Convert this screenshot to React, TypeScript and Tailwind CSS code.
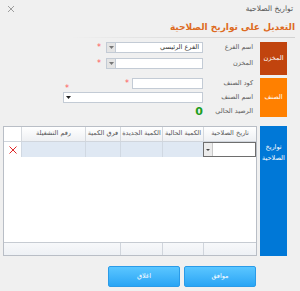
import React from "react";

const F = "font-['DejaVu_Sans',sans-serif]";

function Field({ w, text, drop, darkArrow }: { w: string; text?: string; drop?: boolean; darkArrow?: boolean }) {
  return (
    <div className={`${w} h-[11px] bg-white border border-[#c3cbd5] flex items-center`}>
      <div className="flex-1 text-[6.5px] text-[#333] pr-[3px] leading-none truncate">{text}</div>
      {drop && (
        <div className="w-[9px] h-full bg-[#e4e4e4] border-r border-[#c3cbd5] flex items-center justify-center">
          <svg width="5" height="3" viewBox="0 0 5 3"><path d="M0 0H5L2.5 3Z" fill="#777" /></svg>
        </div>
      )}
      {darkArrow && (
        <div className="w-[8px] h-full flex items-center justify-center">
          <svg width="5" height="3" viewBox="0 0 5 3"><path d="M0 0H5L2.5 3Z" fill="#222" /></svg>
        </div>
      )}
    </div>
  );
}

function Star({ cls }: { cls?: string }) {
  return <span className={`text-[#ff5a5a] text-[8px] leading-none ${cls ?? ""}`}>*</span>;
}

function Label({ children }: { children: React.ReactNode }) {
  return <div className="w-[50px] text-[6.5px] text-[#5a5a5a] leading-none whitespace-nowrap">{children}</div>;
}

export default function App() {
  const headers = ["تاريخ الصلاحية", "الكمية الحالية", "الكمية الجديدة", "فرق الكمية", "رقم التشغيلة", ""];
  const cols = "grid grid-cols-[53px_41px_42px_35px_64px_17px]";
  return (
    <div dir="rtl" className={`${F} w-[300px] h-[291px] bg-[#f0f0f0] overflow-hidden flex flex-col`}>
      {/* title bar */}
      <div className="h-[18px] flex items-center justify-between pr-[7px] pl-[8px]">
        <span className="text-[7.5px] text-[#555]">تواريخ الصلاحية</span>
        <svg width="6" height="6" viewBox="0 0 6 6"><path d="M0 0L6 6M6 0L0 6" stroke="#888" strokeWidth="0.8" /></svg>
      </div>
      {/* heading */}
      <div className="h-[19px] flex items-center pr-[5px]">
        <span className="text-[9px] font-bold text-[#dd6a22]">التعديل على تواريخ الصلاحية</span>
      </div>
      <div className="h-px mr-[5px] ml-[70px] bg-linear-to-l from-[#d2d2d2] via-[#dcdcdc] to-transparent" />

      {/* section 1 */}
      <div className="mt-[4px] flex gap-[7px] pr-[13px] pl-[3px] h-[33px]">
        <div className="w-[27px] h-full bg-[#c1440e] flex items-center justify-center text-white text-[6.5px]">المخزن</div>
        <div className="flex-1 flex flex-col">
          <div className="flex items-center h-[11px]">
            <Label>اسم الفرع</Label>
            <Field w="w-[97px]" text="الفرع الرئيسي" drop />
            <Star cls="mr-[5px]" />
          </div>
          <div className="flex items-center h-[11px] mt-[5px]">
            <Label>المخزن</Label>
            <Field w="w-[97px]" drop />
            <Star cls="mr-[5px]" />
          </div>
        </div>
      </div>

      {/* section 2 */}
      <div className="mt-[3px] flex gap-[7px] pr-[13px] pl-[3px] h-[39px]">
        <div className="w-[27px] h-full bg-[#ff8000] flex items-center justify-center text-white text-[6.5px]">الصنف</div>
        <div className="flex-1 flex flex-col relative">
          <div className="flex items-center h-[11px]">
            <Label>كود الصنف</Label>
            <Field w="w-[71px]" />
            <Star cls="mr-[3px]" />
          </div>
          <Star cls="absolute left-[62px] top-[7px]" />
          <div className="flex items-center h-[11px] mt-[3px]">
            <Label>اسم الصنف</Label>
            <Field w="w-[140px]" darkArrow />
          </div>
          <div className="flex items-center h-[11px] mt-[3px]">
            <Label>الرصيد الحالي</Label>
            <span className="text-[11px] font-bold text-[#1f9e1f] leading-none">0</span>
          </div>
        </div>
      </div>

      {/* grid section */}
      <div className="mt-[9px] flex gap-[3px] pr-[13px] pl-[3px] h-[130px]">
        <div className="w-[27px] h-full bg-[#0078d7] flex flex-col items-center pt-[16px] text-white text-[6.5px] leading-[11px]">
          <span>تواريخ</span>
          <span>الصلاحية</span>
        </div>
        <div className="w-[254px] h-full border border-[#b9bec6] bg-white flex flex-col">
          <div className={`${cols} h-[15px] border-b border-[#d0d5dc]`}>
            {headers.map((h, i) => (
              <div
                key={i}
                className={`flex items-center justify-center text-[6.5px] text-[#555] whitespace-nowrap ${i < 5 ? "bg-linear-to-b from-white to-[#eef0f3] border-l border-[#d5d9de]" : "bg-white"}`}
              >
                {h}
              </div>
            ))}
          </div>
          <div className={`${cols} h-[15px]`}>
            <div className="bg-white border border-[#6e6e6e] flex">
              <div className="flex-1" />
              <div className="w-[9px] h-full bg-[#ececec] border-r border-[#c9c9c9] flex items-center justify-center">
                <svg width="4" height="2" viewBox="0 0 4 2"><path d="M0 0H4L2 2Z" fill="#444" /></svg>
              </div>
            </div>
            <div className="bg-[#dfe8f3] border-l border-[#d0d8e2]" />
            <div className="bg-[#dfe8f3] border-l border-[#d0d8e2]" />
            <div className="bg-[#dfe8f3] border-l border-[#d0d8e2]" />
            <div className="bg-[#dfe8f3] border-l border-[#d0d8e2]" />
            <div className="bg-white flex items-center justify-center">
              <svg width="8" height="8" viewBox="0 0 8 8"><path d="M0.5 0.5L7.5 7.5M7.5 0.5L0.5 7.5" stroke="#e02828" strokeWidth="1" /></svg>
            </div>
          </div>
          <div className="flex-1 bg-white" />
          <div className={`${cols} h-[13px] border-t border-[#c6cbd2] bg-linear-to-b from-[#f7f8fa] to-[#eef1f5]`}>
            <div className="border-l border-[#d0d5dc]" />
            <div className="border-l border-[#d0d5dc]" />
            <div className="border-l border-[#d0d5dc]" />
            <div />
            <div />
            <div />
          </div>
        </div>
      </div>

      {/* buttons */}
      <div className="mt-[10px] flex gap-[4px] pr-[44px]">
        <button className="w-[72px] h-[21px] rounded-[2px] border border-[#2a9be8] bg-linear-to-b from-[#5ac6ff] to-[#27a5f5] text-white text-[6.5px] flex items-center justify-center">موافق</button>
        <button className="w-[72px] h-[21px] rounded-[2px] border border-[#2a9be8] bg-linear-to-b from-[#5ac6ff] to-[#27a5f5] text-white text-[6.5px] flex items-center justify-center">اغلاق</button>
      </div>
    </div>
  );
}
